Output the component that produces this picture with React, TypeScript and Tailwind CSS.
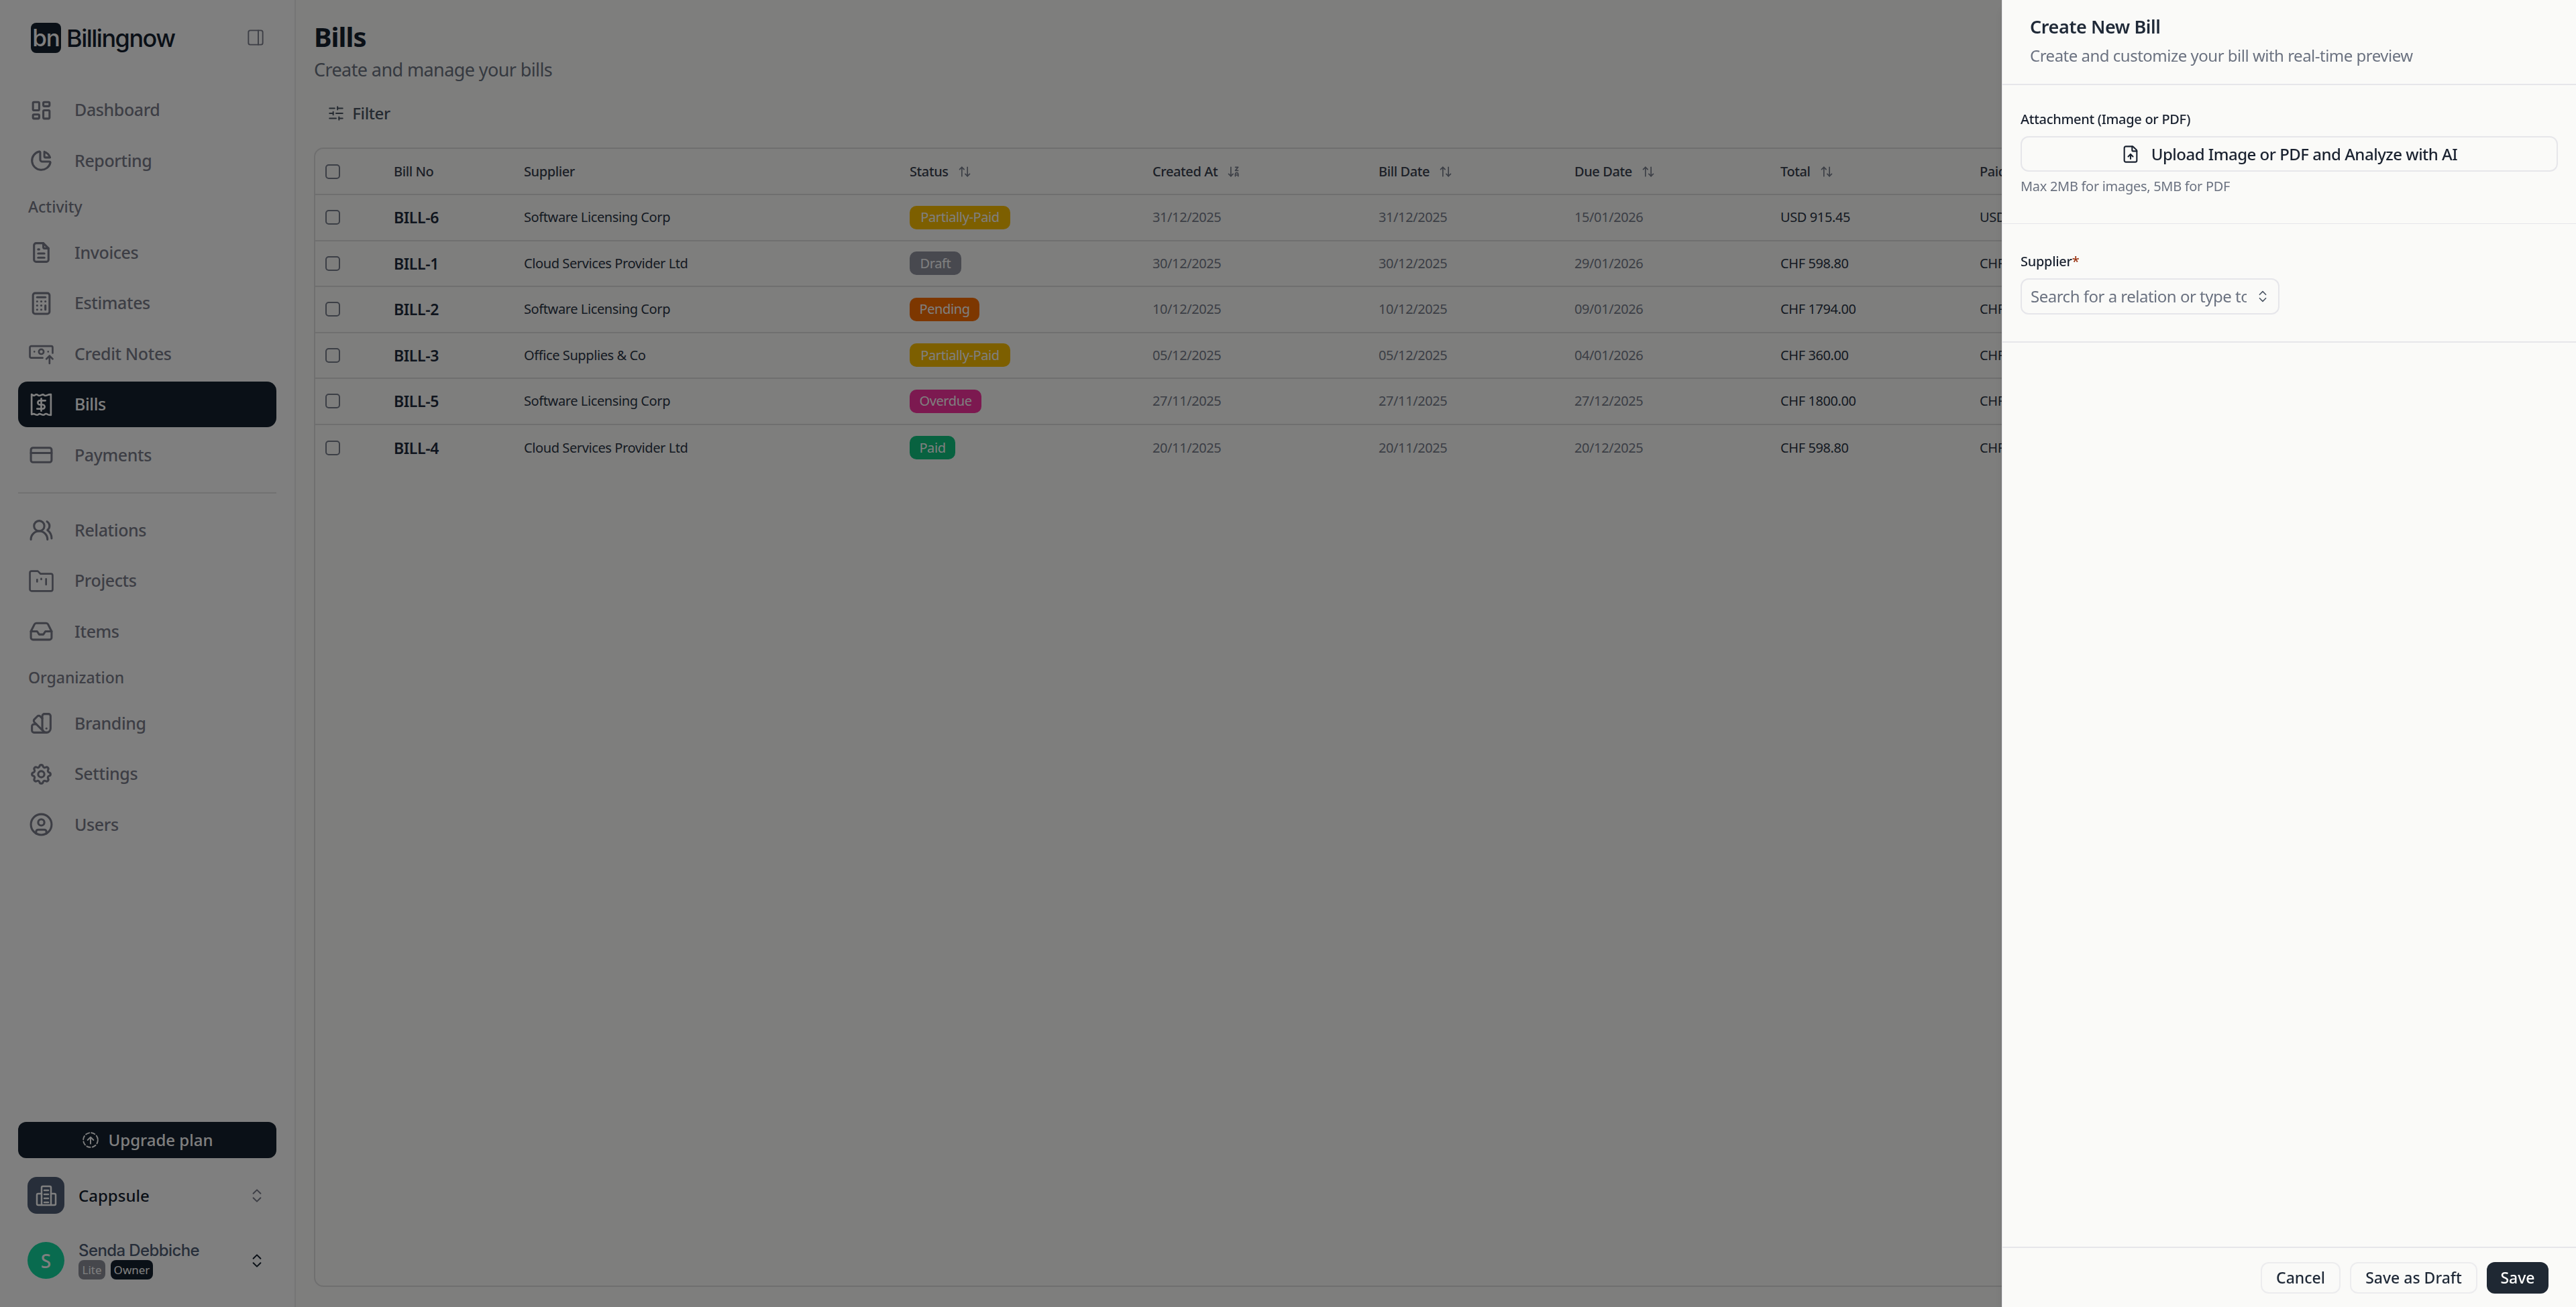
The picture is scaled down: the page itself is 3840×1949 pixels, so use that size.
import React from 'react';
import {
  ArrowDownZA,
  ArrowUpDown,
  Calculator,
  ChevronsUpDown,
  CircleUser,
  CreditCard,
  FileUp,
  Inbox,
  SlidersHorizontal,
  UsersRound,
} from 'lucide-react';
import {
  TbChartPie,
  TbColorSwatch,
  TbFileText,
  TbLayoutDashboard,
  TbLayoutSidebarRight,
  TbSettings,
} from 'react-icons/tb';

const font = { fontFamily: '"Noto Sans", sans-serif' };

const CreditNoteIcon = ({ className }: { className?: string }) => (
  <svg viewBox="0 0 36 36" fill="none" stroke="currentColor" strokeWidth="2.6" strokeLinecap="round" strokeLinejoin="round" className={className}>
    <path d="M20 24H3.5a2 2 0 0 1-2-2V9a2 2 0 0 1 2-2h29a2 2 0 0 1 2 2v8" />
    <circle cx="18" cy="15" r="3.5" />
    <path d="M8 15h.01M28 15h.01" />
    <path d="M30 32v-11M25.500 25.500 30 21l4.500 4.500" />
  </svg>
);

const BillIcon = ({ className }: { className?: string }) => (
  <svg viewBox="0 0 36 36" fill="none" stroke="currentColor" strokeWidth="2.600" strokeLinecap="round" strokeLinejoin="round" className={className}>
    <path d="M4 3c2.500 2 4 2 5 1s3-1 4 0 3 1 5 0 3-1 4 0 3 1 5 0 2-1 5-1v30c-2 0-4 0-5-1s-3-1-4 0-3 1-5 0-3-1-4 0-3 1-5 0-2-1-5 0z" />
    <path d="M24 12h-8a3 3 0 0 0 0 6h4a3 3 0 0 1 0 6h-8M18 9v18" />
  </svg>
);

const FolderBarsIcon = ({ className }: { className?: string }) => (
  <svg viewBox="0 0 36 36" fill="none" stroke="currentColor" strokeWidth="2.600" strokeLinecap="round" strokeLinejoin="round" className={className}>
    <path d="M1.500 6a2.500 2.500 0 0 1 2.500-2.500h9l4 4h15a2.500 2.500 0 0 1 2.500 2.500v20a2.500 2.500 0 0 1-2.500 2.500H4a2.500 2.500 0 0 1-2.500-2.500z" />
    <path d="M12 16v3M18 14.500v1M25 15v8" />
  </svg>
);

const BuildingIcon = ({ className }: { className?: string }) => (
  <svg viewBox="0 0 32 32" fill="none" stroke="currentColor" strokeWidth="2.500" strokeLinecap="round" strokeLinejoin="round" className={className}>
    <path d="M9 30V4a2 2 0 0 1 2-2h10a2 2 0 0 1 2 2v26" />
    <path d="M9 13H4a2 2 0 0 0-2 2v13a2 2 0 0 0 2 2h24a2 2 0 0 0 2-2V15a2 2 0 0 0-2-2h-5" />
    <path d="M13 8h6M13 14h6M13 20h6M13 26h6" />
  </svg>
);

const UpgradeIcon = ({ className }: { className?: string }) => (
  <svg viewBox="0 0 24 24" fill="none" stroke="currentColor" strokeWidth="1.800" strokeLinecap="round" strokeLinejoin="round" className={className}>
    <circle cx="12" cy="12" r="10" strokeDasharray="5 3" />
    <path d="M12 17V8M8 12l4-4 4 4" />
  </svg>
);

const NavItem = ({ icon: Icon, label, active }: { icon: React.ComponentType<{ className?: string }>; label: string; active?: boolean }) => (
  <div className={`flex h-[68px] shrink-0 items-center rounded-[14px] pl-[16px] ${active ? 'bg-[#14202e] text-white' : 'text-[#7a7d8b]'}`}>
    <div className="flex w-[37px] justify-center">
      <Icon className="h-[37px] w-[37px]" />
    </div>
    <span className="ml-[31px] text-[25px] font-medium tracking-[-0.4px]">{label}</span>
  </div>
);

const NavLabel = ({ label }: { label: string }) => (
  <div className="flex h-[54px] shrink-0 items-center pl-[15px] text-[23px] font-medium text-[#7a7d8b]">{label}</div>
);

const Sidebar = () => (
  <aside className="flex h-screen w-[441px] shrink-0 flex-col border-r-2 border-[#ebebeb] bg-white px-[27px]">
    <div className="flex h-[130px] shrink-0 items-start justify-between pt-[34px] pr-[15px] pl-[19px]">
      <div className="flex items-center gap-[8px]">
        <div className="flex h-[45px] w-[45px] items-center justify-center rounded-[8px] bg-[#14202e] text-[35px] font-medium leading-none tracking-[-1px] text-white" style={{ fontFamily: 'Inter, sans-serif' }}>
          bn
        </div>
        <span className="text-[36px] font-medium leading-none tracking-[-1.5px] text-[#14202e]" style={{ fontFamily: 'Inter, sans-serif' }}>Billingnow</span>
      </div>
      <TbLayoutSidebarRight className="mt-[6px] h-[32px] w-[32px] text-[#7a7d8b]" strokeWidth={1.4} />
    </div>
    <nav className="flex flex-col gap-[7.5px]">
      <NavItem icon={TbLayoutDashboard} label="Dashboard" />
      <NavItem icon={TbChartPie} label="Reporting" />
      <NavLabel label="Activity" />
      <NavItem icon={TbFileText} label="Invoices" />
      <NavItem icon={Calculator} label="Estimates" />
      <NavItem icon={CreditNoteIcon} label="Credit Notes" />
      <NavItem icon={BillIcon} label="Bills" active />
      <NavItem icon={CreditCard} label="Payments" />
      <div className="flex h-[29px] shrink-0 items-center">
        <div className="w-full border-t-2 border-[#e4e4e4]" />
      </div>
      <NavItem icon={UsersRound} label="Relations" />
      <NavItem icon={FolderBarsIcon} label="Projects" />
      <NavItem icon={Inbox} label="Items" />
      <NavLabel label="Organization" />
      <NavItem icon={TbColorSwatch} label="Branding" />
      <NavItem icon={TbSettings} label="Settings" />
      <NavItem icon={CircleUser} label="Users" />
    </nav>
    <div className="mt-auto flex flex-col pb-[41px]">
      <button className="flex h-[54px] items-center justify-center gap-[14px] rounded-[12px] bg-[#14202e] text-[24px] font-medium text-white">
        <UpgradeIcon className="h-[26px] w-[26px]" />
        Upgrade plan
      </button>
      <div className="mt-[28px] flex items-center pr-[16px] pl-[14px]">
        <div className="flex h-[55px] w-[55px] items-center justify-center rounded-[14px] bg-[#4e5c74] text-white">
          <BuildingIcon className="h-[32px] w-[32px]" />
        </div>
        <span className="ml-[21px] text-[24px] font-medium text-[#14202e]">Cappsule</span>
        <ChevronsUpDown className="ml-auto h-[26px] w-[26px] text-[#7a7d8b]" strokeWidth={1.8} />
      </div>
      <div className="mt-[41px] flex items-center pr-[16px] pl-[14px]">
        <div className="flex h-[55px] w-[55px] items-center justify-center rounded-full bg-[#12d79f] text-[28px] font-medium text-white">S</div>
        <div className="ml-[21px] flex flex-col">
          <span className="text-[24px] leading-[28px] font-medium tracking-[-0.6px] text-[#4e5c74]" style={{ fontFamily: 'Inter, sans-serif' }}>Senda Debbiche</span>
          <div className="flex gap-[8px]">
            <span className="flex h-[29px] w-[40px] items-center justify-center rounded-[8px] bg-[#8c8e99] text-[17px] text-white">Lite</span>
            <span className="flex h-[29px] w-[63px] items-center justify-center rounded-[8px] bg-[#14202e] text-[17px] text-white">Owner</span>
          </div>
        </div>
        <ChevronsUpDown className="ml-auto h-[26px] w-[26px] text-[#14202e]" strokeWidth={1.8} />
      </div>
    </div>
  </aside>
);

const badgeClass: Record<string, string> = {
  'Partially-Paid': 'bg-[#fabf00] w-[150px]',
  Draft: 'bg-[#90939f] w-[77px]',
  Pending: 'bg-[#fa6e00] w-[104px]',
  Overdue: 'bg-[#f832a0] w-[107px]',
  Paid: 'bg-[#10c480] w-[68px]',
};

const bills = [
  { no: 'BILL-6', supplier: 'Software Licensing Corp', status: 'Partially-Paid', created: '31/12/2025', billDate: '31/12/2025', due: '15/01/2026', total: 'USD 915.45' },
  { no: 'BILL-1', supplier: 'Cloud Services Provider Ltd', status: 'Draft', created: '30/12/2025', billDate: '30/12/2025', due: '29/01/2026', total: 'CHF 598.80' },
  { no: 'BILL-2', supplier: 'Software Licensing Corp', status: 'Pending', created: '10/12/2025', billDate: '10/12/2025', due: '09/01/2026', total: 'CHF 1794.00' },
  { no: 'BILL-3', supplier: 'Office Supplies & Co', status: 'Partially-Paid', created: '05/12/2025', billDate: '05/12/2025', due: '04/01/2026', total: 'CHF 360.00' },
  { no: 'BILL-5', supplier: 'Software Licensing Corp', status: 'Overdue', created: '27/11/2025', billDate: '27/11/2025', due: '27/12/2025', total: 'CHF 1800.00' },
  { no: 'BILL-4', supplier: 'Cloud Services Provider Ltd', status: 'Paid', created: '20/11/2025', billDate: '20/11/2025', due: '20/12/2025', total: 'CHF 598.80' },
];

const gridCols = 'grid grid-cols-[117px_194px_575px_362px_337px_292px_307px_297px_1fr] items-center';

const Checkbox = () => <div className="ml-[15px] h-[22px] w-[22px] rounded-[5px] border-2 border-[#787e8c]" />;

const HeadCell = ({ label, sort }: { label: string; sort?: 'za' | 'both' }) => (
  <div className="flex items-center gap-[14px] text-[20px] font-medium tracking-[-0.4px] text-[#38404e]">
    {label}
    {sort === 'both' && <ArrowUpDown className="h-[20px] w-[20px] text-[#787e8c]" />}
    {sort === 'za' && <ArrowDownZA className="h-[20px] w-[20px] text-[#787e8c]" />}
  </div>
);

const BillsTable = () => (
  <div className="mt-[28px] flex min-h-0 flex-1 flex-col rounded-[14px] border-2 border-[#dfdfdf]">
    <div className={`${gridCols} h-[69px] shrink-0 border-b-2 border-[#dfdfdf]`}>
      <Checkbox />
      <HeadCell label="Bill No" />
      <HeadCell label="Supplier" />
      <HeadCell label="Status" sort="both" />
      <HeadCell label="Created At" sort="za" />
      <HeadCell label="Bill Date" sort="both" />
      <HeadCell label="Due Date" sort="both" />
      <HeadCell label="Total" sort="both" />
      <HeadCell label="Paid" />
    </div>
    {bills.map((b, i) => (
      <div key={b.no} className={`${gridCols} h-[68.5px] shrink-0 ${i < bills.length - 1 ? 'border-b-2 border-[#dfdfdf]' : ''}`}>
        <Checkbox />
        <span className="text-[23px] font-semibold tracking-[-0.4px] text-[#1f2b3c]">{b.no}</span>
        <span className="text-[20px] tracking-[-0.4px] text-[#2b3545]">{b.supplier}</span>
        <div>
          <span className={`flex h-[35px] items-center justify-center rounded-[10px] text-[20px] tracking-[-0.4px] text-white ${badgeClass[b.status]}`}>{b.status}</span>
        </div>
        <span className="text-[20px] tracking-[-0.4px] text-[#787e8c]">{b.created}</span>
        <span className="text-[20px] tracking-[-0.4px] text-[#787e8c]">{b.billDate}</span>
        <span className="text-[20px] tracking-[-0.4px] text-[#787e8c]">{b.due}</span>
        <span className="text-[20px] tracking-[-0.4px] text-[#2b3545]">{b.total}</span>
        <span className="text-[20px] tracking-[-0.4px] text-[#2b3545]">{b.total}</span>
      </div>
    ))}
  </div>
);

const CreateBillPanel = () => (
  <div className="fixed inset-y-0 right-0 flex w-[856px] flex-col border-l border-[#e6e6ea] bg-[#fafaf8] shadow-lg">
    <div className="flex h-[127px] shrink-0 flex-col border-b-2 border-[#e6e6ea] pt-[21px] pl-[41px]">
      <h2 className="text-[27px] leading-[38px] font-semibold tracking-[-0.4px] text-[#1f2937]">Create New Bill</h2>
      <p className="mt-[10px] text-[24px] leading-[28px] tracking-[-0.5px] text-[#6b7280]">Create and customize your bill with real-time preview</p>
    </div>
    <div className="flex h-[207px] shrink-0 flex-col border-b border-[#e6e6ea] px-[27px] pt-[38px]">
      <label className="text-[20px] leading-[26px] font-medium tracking-[-0.3px] text-[#1a2230]">Attachment (Image or PDF)</label>
      <button className="mt-[12px] flex h-[53px] items-center justify-center gap-[17px] rounded-[12px] border-2 border-[#e6e6ea] text-[24px] font-medium tracking-[-0.5px] text-[#1a2230]">
        <FileUp className="h-[28px] w-[28px]" strokeWidth={1.8} />
        Upload Image or PDF and Analyze with AI
      </button>
      <p className="mt-[9px] text-[20px] leading-[26px] tracking-[-0.3px] text-[#6b7280]">Max 2MB for images, 5MB for PDF</p>
    </div>
    <div className="flex h-[177px] shrink-0 flex-col border-b-2 border-[#e6e6ea] px-[27px] pt-[43px]">
      <label className="text-[20px] leading-[26px] font-medium tracking-[-0.3px] text-[#1a2230]">
        Supplier<span className="text-[#9a3412]">*</span>
      </label>
      <div className="mt-[12px] flex h-[54px] w-[386px] items-center rounded-[12px] border-2 border-[#e6e6ea] pr-[12px] pl-[13px]">
        <span className="w-[322px] overflow-hidden text-[24px] whitespace-nowrap tracking-[-0.5px] text-[#6b7280]">Search for a relation or type to create</span>
        <ChevronsUpDown className="ml-auto h-[22px] w-[22px] text-[#4b5563]" strokeWidth={1.8} />
      </div>
    </div>
    <div className="mt-auto flex h-[90px] shrink-0 items-start justify-end gap-[14px] border-t-2 border-[#e6e6ea] pt-[21px] pr-[41px]">
      <button className="h-[47px] w-[119px] rounded-[12px] border-2 border-[#ececee] text-[23px] font-medium text-[#1f2937]">Cancel</button>
      <button className="h-[47px] w-[190px] rounded-[12px] border-2 border-[#ececee] text-[23px] font-medium text-[#1f2937]">Save as Draft</button>
      <button className="h-[47px] w-[92px] rounded-[12px] bg-[#1f2833] text-[23px] font-medium text-white">Save</button>
    </div>
  </div>
);

export default function App() {
  return (
    <div className="flex h-screen w-full overflow-hidden bg-[#fcfcfb]" style={font}>
      <Sidebar />
      <main className="flex min-w-0 flex-1 flex-col pt-[30px] pr-[28px] pb-[30px] pl-[27px]">
        <h1 className="text-[40px] leading-[50px] font-bold tracking-[-1px] text-[#14202e]">Bills</h1>
        <p className="mt-[6px] text-[27px] leading-[36px] tracking-[-0.6px] text-[#6b7280]">Create and manage your bills</p>
        <button className="mt-[24px] flex h-[46px] w-[134px] items-center justify-center gap-[11px] rounded-[12px] text-[24px] font-medium tracking-[-0.4px] text-[#4b5563]">
          <SlidersHorizontal className="h-[26px] w-[26px]" strokeWidth={1.8} />
          Filter
        </button>
        <BillsTable />
      </main>
      <div className="fixed inset-0 bg-black/50" />
      <CreateBillPanel />
    </div>
  );
}
